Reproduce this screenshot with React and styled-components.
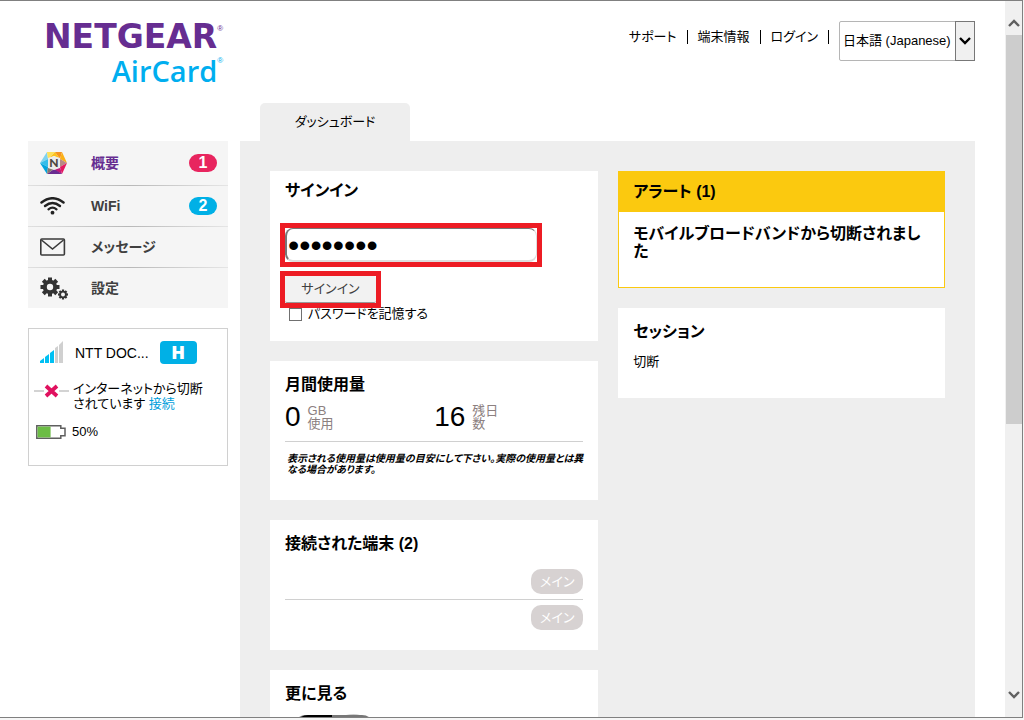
import { useState } from "react";
import styled, { createGlobalStyle } from "styled-components";

const menuItems = [
  { id: "home", label: "概要", icon: HexIcon, badge: 1, badgeColor: "#e8255f", active: true },
  { id: "wifi", label: "WiFi", icon: WifiIcon, badge: 2, badgeColor: "#00b0e6" },
  { id: "messages", label: "メッセージ", icon: MailIcon },
  { id: "settings", label: "設定", icon: GearsIcon },
];

export default function App() {
  const [password, setPassword] = useState("password");

  return (
    <>
      <GlobalStyle />
      <Window>
        <Page>
          <Header>
            <Logo href="#">
              <Brand>
                NETGEAR<Mark>®</Mark>
              </Brand>
              <Product>
                AirCard<Mark>®</Mark>
              </Product>
            </Logo>
            <TopNav>
              <TopLink href="#support">サポート</TopLink>
              <TopLink href="#about">端末情報</TopLink>
              <TopLink href="#login">ログイン</TopLink>
              <SelectBox>
                <LanguageSelect aria-label="言語" defaultValue="ja">
                  <option value="ja">日本語 (Japanese)</option>
                </LanguageSelect>
                <SelectArrow>
                  <Chevron down color="#000" />
                </SelectArrow>
              </SelectBox>
            </TopNav>
          </Header>

          <Body>
            <Sidebar>
              <Menu>
                {menuItems.map(({ id, label, icon: Icon, badge, badgeColor, active }) => (
                  <MenuItem key={id}>
                    <MenuLink href={`#${id}`} $active={active}>
                      <Icon />
                      <MenuLabel>{label}</MenuLabel>
                      {badge && <Badge $color={badgeColor}>{badge}</Badge>}
                    </MenuLink>
                  </MenuItem>
                ))}
              </Menu>
              <Status>
                <NetworkRow>
                  <SignalIcon />
                  <Carrier>NTT DOC...</Carrier>
                  <NetworkType>H</NetworkType>
                </NetworkRow>
                <ConnectionRow>
                  <DisconnectedIcon />
                  <StatusText>
                    インターネットから切断
                    <br />
                    されています <ConnectLink href="#connect">接続</ConnectLink>
                  </StatusText>
                </ConnectionRow>
                <BatteryRow>
                  <BatteryIcon />
                  <StatusText>50%</StatusText>
                </BatteryRow>
              </Status>
            </Sidebar>

            <Main>
              <Tab href="#dashboard">ダッシュボード</Tab>
              <Panel>
                <Column>
                  <SignInCard>
                    <CardTitle>サインイン</CardTitle>
                    <SignInForm onSubmit={(event) => event.preventDefault()}>
                      <FieldFrame>
                        <PasswordInput
                          type="password"
                          aria-label="パスワード"
                          value={password}
                          onChange={(event) => setPassword(event.target.value)}
                        />
                      </FieldFrame>
                      <ButtonFrame>
                        <SignInButton type="submit">サインイン</SignInButton>
                      </ButtonFrame>
                      <Remember>
                        <Checkbox type="checkbox" />
                        パスワードを記憶する
                      </Remember>
                    </SignInForm>
                  </SignInCard>

                  <Card>
                    <CardTitle>月間使用量</CardTitle>
                    <Stats>
                      <Stat>
                        <StatValue>0</StatValue>
                        <StatUnit>
                          GB
                          <br />
                          使用
                        </StatUnit>
                      </Stat>
                      <Stat>
                        <StatValue>16</StatValue>
                        <StatUnit>
                          残日
                          <br />数
                        </StatUnit>
                      </Stat>
                    </Stats>
                    <Note>
                      表示される使用量は使用量の目安にして下さい。実際の使用量とは異
                      <br />
                      なる場合があります。
                    </Note>
                  </Card>

                  <Card>
                    <CardTitle>接続された端末 (2)</CardTitle>
                    <Devices>
                      <Device>
                        <Pill>メイン</Pill>
                      </Device>
                      <Device>
                        <Pill>メイン</Pill>
                      </Device>
                    </Devices>
                  </Card>

                  <Card>
                    <CardTitle>更に見る</CardTitle>
                    <HotspotIcon />
                  </Card>
                </Column>

                <Column>
                  <Alert>
                    <AlertTitle>アラート (1)</AlertTitle>
                    <AlertText>
                      モバイルブロードバンドから切断されまし
                      <br />た
                    </AlertText>
                  </Alert>
                  <Card>
                    <CardTitle>セッション</CardTitle>
                    <SessionText>切断</SessionText>
                  </Card>
                </Column>
              </Panel>
            </Main>
          </Body>
        </Page>
        <Scrollbar>
          <ScrollButton aria-label="上へ">
            <Chevron color="#606060" />
          </ScrollButton>
          <Track>
            <Thumb />
          </Track>
          <ScrollButton aria-label="下へ">
            <Chevron down color="#606060" />
          </ScrollButton>
        </Scrollbar>
      </Window>
    </>
  );
}

function Chevron({ down, color }) {
  return (
    <svg width="12" height="8" viewBox="0 0 12 8" fill="none" stroke={color} strokeWidth="2.4">
      <path d={down ? "M1 1l5 5 5-5" : "M1 7l5-5 5 5"} />
    </svg>
  );
}

function HexIcon() {
  return (
    <svg width="28" height="24" viewBox="0 0 28 24">
      <path d="M7 1L0 12l8-4z" fill="#7fd3f0" />
      <path d="M0 12l8-4v8z" fill="#35bdea" />
      <path d="M0 12l7 11 1-7z" fill="#00a3dd" />
      <path d="M7 1h8L8 8z" fill="#fde05a" />
      <path d="M15 1L8 8l6-3 6 3z" fill="#fcc21b" />
      <path d="M15 1h7l-2 7z" fill="#f7941e" />
      <path d="M22 1l5 11-7-4z" fill="#fbb017" />
      <path d="M27 12l-7-4v8z" fill="#b98a86" />
      <path d="M27 12l-5 11-2-7z" fill="#e5175f" />
      <path d="M22 23l-8-4 6-3z" fill="#c2187b" />
      <path d="M7 23l7-5 8 5z" fill="#6a2c91" />
      <path d="M7 23l1-7 6 2z" fill="#83786f" />
      <path d="M8 7l6-2 6 2v10l-6 2-6-2z" fill="#ececec" />
      <text
        x="14"
        y="16"
        textAnchor="middle"
        fontFamily="Lato, sans-serif"
        fontWeight="900"
        fontSize="12"
        fill="#4d4643"
      >
        N
      </text>
    </svg>
  );
}

function WifiIcon() {
  return (
    <svg width="28" height="18" viewBox="0 0 28 18" fill="none" stroke="#222" strokeLinecap="round">
      <path d="M1.500 5.500Q12.500-3 23.500 5.500" strokeWidth="2.500" />
      <path d="M5 9Q12.500 2.800 20 9" strokeWidth="2.400" />
      <path d="M8.500 12.300Q12.500 9 16.500 12.300" strokeWidth="2.300" />
      <circle cx="12.500" cy="15.700" r="1.900" fill="#222" stroke="none" />
    </svg>
  );
}

function MailIcon() {
  return (
    <svg width="28" height="18" viewBox="0 0 28 18" fill="none" stroke="#3a3a3a" strokeWidth="1.600">
      <rect x="0.800" y="1" width="23.600" height="16" rx="1" />
      <path d="M1.500 2l11 9 11-9" />
    </svg>
  );
}

function Gear({ x, y, radius, hole, tooth }) {
  return (
    <g transform={`translate(${x} ${y})`}>
      {[0, 45, 90, 135].map((angle) => (
        <rect
          key={angle}
          x={-tooth / 2}
          y={-radius}
          width={tooth}
          height={radius * 2}
          transform={`rotate(${angle})`}
          fill="#333"
        />
      ))}
      <circle r={radius * 0.76} fill="#333" />
      <circle r={hole} fill="#f5f5f5" />
    </g>
  );
}

function GearsIcon() {
  return (
    <svg width="28" height="24" viewBox="0 0 28 24">
      <Gear x={10} y={11} radius={9.5} hole={3.2} tooth={4} />
      <Gear x={23} y={18.5} radius={5} hole={2} tooth={2.2} />
    </svg>
  );
}

function SignalIcon() {
  return (
    <svg width="24" height="22" viewBox="0 0 24 22">
      <path d="M0 22v-2l4-3v5z" fill="#00c0f3" />
      <path d="M5 22v-6l4-3v9z" fill="#00c0f3" />
      <path d="M10 22V12l4-3v13z" fill="#00c0f3" />
      <path d="M15 22V7l3-2v17z" fill="#d0d0d0" />
      <path d="M19 22V4l4-4v22z" fill="#d0d0d0" />
    </svg>
  );
}

function DisconnectedIcon() {
  return (
    <svg width="35" height="14" viewBox="0 0 35 14" fill="none">
      <path d="M0 7h10M25 7h10" stroke="#d3d3d3" strokeWidth="2" />
      <path d="M12 2l11 10M23 2L12 12" stroke="#e0115f" strokeWidth="3.800" />
    </svg>
  );
}

function BatteryIcon() {
  return (
    <svg width="30" height="14" viewBox="0 0 30 14">
      <path d="M.8 .8h24v2.400h4.200v7.600h-4.200v2.400H.8z" fill="#fff" stroke="#5f5f5f" strokeWidth="1.500" />
      <path d="M1.600 1.600h13v10.800h-13z" fill="#6cbd45" />
    </svg>
  );
}

function HotspotIcon() {
  return (
    <HotspotDrawing viewBox="0 0 76 40">
      <path d="M0 8Q2 1 10 1h56q8 0 10 7v32H0z" fill="#777" />
      <path d="M2 8Q4 1 12 1h24v39H2z" fill="#000" />
      <path d="M50 1q8-2 14 0z" fill="#ccc" />
    </HotspotDrawing>
  );
}

const GlobalStyle = createGlobalStyle`
  *, *::before, *::after {
    box-sizing: border-box;
  }

  body {
    margin: 0;
    background: #f6f6f6;
    color: #000;
    font-family: "Liberation Sans", "Noto Sans CJK JP", sans-serif;
    font-size: 13px;
    line-height: 20px;
    font-feature-settings: "palt";
  }

  a {
    color: inherit;
    text-decoration: none;
  }

  svg {
    display: block;
    flex-shrink: 0;
  }

  h2, p, ul {
    margin: 0;
    padding: 0;
  }

  button, input, select {
    font: inherit;
    font-feature-settings: inherit;
  }
`;

const Window = styled.div`
  display: flex;
  height: calc(100vh - 2px);
  margin-right: 1px;
  border: solid #808080;
  border-width: 1px 1px 1px 0;
  background: #fff;
`;

const Page = styled.div`
  flex: 1;
  overflow: hidden;
  padding: 0 30px 0 28px;
`;

const Header = styled.header`
  display: flex;
  justify-content: space-between;
  align-items: flex-start;
  height: 102px;
  padding-top: 20px;
`;

const Logo = styled.a`
  display: flex;
  flex-direction: column;
  align-items: flex-end;
  margin-left: 16px;
`;

const Brand = styled.span`
  display: flex;
  color: #662d91;
  font: bold 33px/32px "DejaVu Sans", sans-serif;
`;

const Product = styled.span`
  display: flex;
  color: #00aeef;
  font: 600 29px/36px "Open Sans", sans-serif;
`;

const Mark = styled.span`
  width: 8px;
  font: 8px/16px "Liberation Sans", sans-serif;
`;

const TopNav = styled.nav`
  display: flex;
  align-items: flex-start;
`;

const TopLink = styled.a`
  display: flex;
  align-items: center;
  height: 32px;

  &::after {
    content: "";
    width: 1px;
    height: 14px;
    margin: 0 10px;
    background: #000;
  }
`;

const SelectBox = styled.div`
  position: relative;
`;

const LanguageSelect = styled.select`
  appearance: none;
  height: 40px;
  padding: 0 23px 0 3px;
  border: 1px solid #b5b5b5;
  border-radius: 2px;
  background: #fff;
  color: #000;
`;

const SelectArrow = styled.span`
  position: absolute;
  inset: 0 0 0 auto;
  display: flex;
  align-items: center;
  justify-content: center;
  width: 20px;
  border: 1px solid #777;
  background: #f0f0f0;
  pointer-events: none;
`;

const Body = styled.div`
  display: grid;
  grid-template-columns: 200px 1fr;
  gap: 12px;
`;

const Sidebar = styled.aside`
  display: flex;
  flex-direction: column;
  gap: 20px;
  padding-top: 38px;
`;

const Menu = styled.ul`
  background: #f5f5f5;
  list-style: none;
`;

const MenuItem = styled.li`
  border-bottom: 1px solid;
  border-image: linear-gradient(90deg, #e0e0e0, #b8b8b8 50%, #e6e6e6) 1;

  &:first-child {
    padding: 2px 0;
  }

  &:last-child {
    border: 0;
  }
`;

const MenuLink = styled.a`
  display: flex;
  align-items: center;
  height: 40px;
  padding: 0 11px 0 12px;
  color: ${({ $active }) => ($active ? "#662d91" : "#404040")};
  font-size: 14px;
  font-weight: bold;
`;

const MenuLabel = styled.span`
  flex: 1;
  margin-left: 23px;
`;

const Badge = styled.span`
  width: 28px;
  border-radius: 9px;
  background: ${({ $color }) => $color};
  color: #fff;
  font-size: 16px;
  line-height: 18px;
  text-align: center;
`;

const Status = styled.section`
  min-height: 138px;
  padding: 11px 5px;
  border: 1px solid #d0d0d0;
`;

const NetworkRow = styled.div`
  display: flex;
  align-items: center;
  height: 24px;
  padding: 0 6px;
`;

const Carrier = styled.span`
  margin: 2px 11px 0 11px;
  font-size: 14px;
`;

const NetworkType = styled.span`
  width: 37px;
  border-radius: 4px;
  background: #00b0e6;
  color: #fff;
  font: 800 18px/23px "Open Sans", sans-serif;
  text-align: center;
`;

const ConnectionRow = styled.div`
  display: flex;
  gap: 4px;
  margin-top: 17px;

  svg {
    margin-top: 3px;
  }
`;

const StatusText = styled.p`
  line-height: 15px;
`;

const ConnectLink = styled.a`
  color: #00a0dc;
`;

const BatteryRow = styled.div`
  display: flex;
  align-items: center;
  gap: 6px;
  margin-top: 13px;
  padding-left: 2px;
`;

const Main = styled.main`
  display: flex;
  flex-direction: column;
  align-items: flex-start;
`;

const Tab = styled.a`
  width: 150px;
  margin-left: 20px;
  border-radius: 5px 5px 0 0;
  background: #eee;
  line-height: 38px;
  text-align: center;
`;

const Panel = styled.div`
  display: grid;
  grid-template-columns: 1fr 1fr;
  align-items: start;
  gap: 20px;
  width: 100%;
  padding: 30px;
  background: #eee;
`;

const Column = styled.div`
  display: flex;
  flex-direction: column;
  gap: 20px;
`;

const Card = styled.section`
  padding: 14px 15px 20px;
  background: #fff;
`;

const SignInCard = styled(Card)`
  padding: 10px 15px 16px;
`;

const CardTitle = styled.h2`
  font-size: 16px;
  line-height: 20px;
`;

const SignInForm = styled.form`
  display: flex;
  flex-direction: column;
  align-items: flex-start;
  margin-top: 27px;
`;

const FieldFrame = styled.div`
  position: relative;
  display: flex;
  width: 100%;
  max-width: 252px;

  &::after {
    content: "";
    position: absolute;
    inset: -5px;
    border: 5px solid #ed1c24;
    pointer-events: none;
  }
`;

const ButtonFrame = styled(FieldFrame)`
  width: auto;
  margin-top: 14px;
`;

const PasswordInput = styled.input`
  width: 100%;
  height: 34px;
  padding: 2px 1px 0;
  border: solid;
  border-width: 1px 1px 2px 2px;
  border-color: #777 #ddd #ddd #777;
  border-radius: 8px;
  background: #fff;
  color: #000;
  font-size: 32px;
  outline: 0;
`;

const SignInButton = styled.button`
  width: 91px;
  height: 27px;
  padding: 0;
  border: 0;
  border-bottom: 1px solid #999;
  border-radius: 2px;
  background: #f2f2f2;
  color: #404040;
`;

const Remember = styled.label`
  display: flex;
  align-items: center;
  gap: 6px;
  padding-left: 4px;
  line-height: 22px;
`;

const Checkbox = styled.input`
  appearance: none;
  width: 13px;
  height: 13px;
  margin: 0;
  border: 1px solid #707070;
  background: #fff;

  &:checked {
    background: #707070;
  }
`;

const Stats = styled.div`
  display: grid;
  grid-template-columns: 1fr 1fr;
  margin-top: 9px;
  padding-bottom: 11px;
  border-bottom: 1px solid #d0d0d0;
`;

const Stat = styled.div`
  display: flex;
  gap: 7px;
`;

const StatValue = styled.span`
  font-size: 28px;
  line-height: 26px;
`;

const StatUnit = styled.span`
  color: #8c8080;
  line-height: 13px;
`;

const Note = styled.p`
  padding: 11px 0 5px 2px;
  font-size: 10px;
  font-style: italic;
  font-weight: bold;
  line-height: 11px;
  white-space: nowrap;
`;

const Devices = styled.ul`
  margin-top: 15px;
  list-style: none;
`;

const Device = styled.li`
  display: flex;
  justify-content: flex-end;

  & + & {
    margin-top: 5px;
    padding-top: 5px;
    border-top: 1px solid #d0d0d0;
  }
`;

const Pill = styled.span`
  width: 52px;
  border-radius: 10px;
  background: #d7d2d2;
  color: #fff;
  line-height: 25px;
  text-align: center;
`;

const HotspotDrawing = styled.svg`
  width: 76px;
  margin: 10px 0 0 11px;
`;

const Alert = styled.section`
  border: 1px solid #fbc90f;
  background: #fff;
`;

const AlertTitle = styled(CardTitle)`
  padding: 0 14px;
  background: #fbc90f;
  line-height: 40px;
`;

const AlertText = styled.p`
  padding: 13px 14px 26px;
  font-size: 16px;
  font-weight: bold;
  line-height: 18px;
`;

const SessionText = styled.p`
  padding: 10px 0 6px;
`;

const Scrollbar = styled.div`
  display: flex;
  flex-direction: column;
  width: 17px;
  background: #f0f0f0;
`;

const ScrollButton = styled.button`
  display: flex;
  align-items: center;
  justify-content: center;
  height: 34px;
  padding: 10px 0 0;
  border: 0;
  background: none;

  &:last-child {
    padding: 0 0 10px;
  }
`;

const Track = styled.div`
  flex: 1;
  padding: 0 0 0 1px;
`;

const Thumb = styled.div`
  height: 60%;
  background: #cdcdcd;
`;
